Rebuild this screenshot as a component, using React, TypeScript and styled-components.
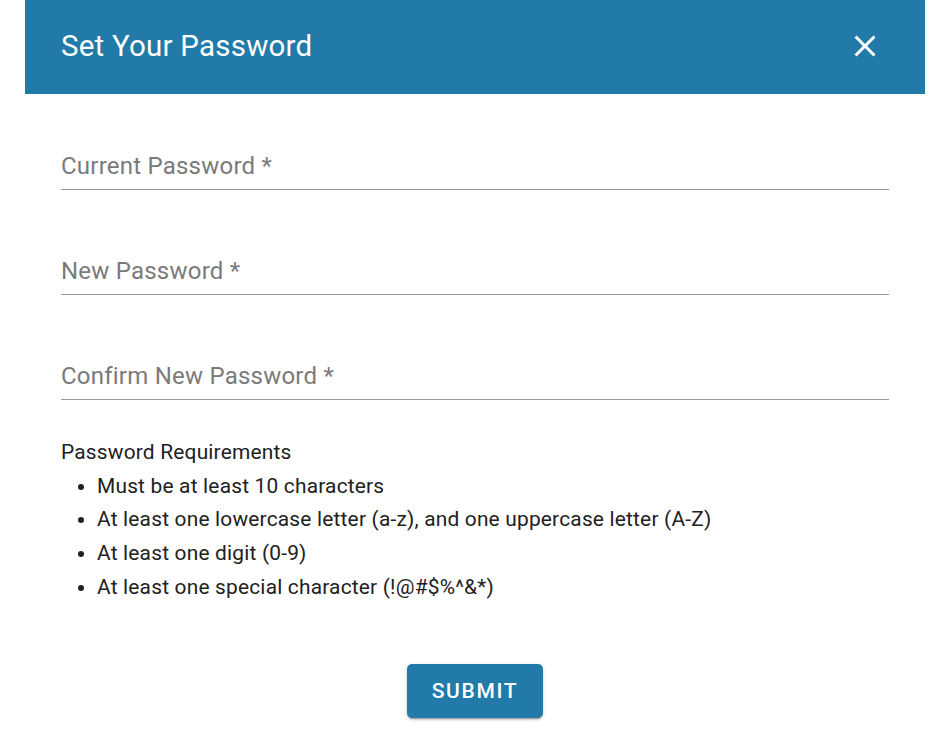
import React from "react";
import styled, { createGlobalStyle } from "styled-components";

const Global = createGlobalStyle`
  html, body { margin: 0; padding: 0; background: #fff; }
  body { font-family: Roboto, "Liberation Sans", Arial, sans-serif; }
  * { box-sizing: border-box; }
`;

const Page = styled.div`
  padding-left: 25px;
  background: #fff;
`;

const Dialog = styled.div`
  width: 900px;
  background: #fff;
`;

const Header = styled.header`
  height: 94px;
  background: #217aa8;
  display: flex;
  align-items: center;
  justify-content: space-between;
  padding: 0 42px 2px 36px;
`;

const Title = styled.h2`
  margin: 0;
  color: #fff;
  font-size: 29.5px;
  font-weight: 400;
  letter-spacing: 0.0075em;
`;

const CloseButton = styled.button`
  border: 0;
  background: transparent;
  padding: 0;
  width: 36px;
  height: 36px;
  display: flex;
  align-items: center;
  justify-content: center;
  color: #fff;
  cursor: pointer;
`;

const Content = styled.div`
  padding: 59px 36px 0 36px;
  display: flex;
  flex-direction: column;
`;

const Fields = styled.div`
  display: flex;
  flex-direction: column;
  gap: 68px;
`;

const Field = styled.div`
  border-bottom: 1px solid #9a9a9a;
  padding-bottom: 10px;
`;

const Label = styled.label`
  display: block;
  font-size: 24px;
  line-height: 26px;
  letter-spacing: 0.00938em;
  color: #7a7a7a;
`;

const Requirements = styled.div`
  margin-top: 36px;
  font-size: 20.9px;
  line-height: 33.7px;
  letter-spacing: 0.00938em;
  color: #212121;
`;

const ReqList = styled.ul`
  margin: 0;
  padding-left: 36px;
`;

const Footer = styled.div`
  display: flex;
  justify-content: center;
  margin-top: 59px;
  padding-bottom: 14px;
`;

const SubmitButton = styled.button`
  width: 136px;
  height: 54px;
  border: 0;
  border-radius: 5px;
  background: #217aa8;
  color: #fff;
  font-family: Roboto, "Liberation Sans", Arial, sans-serif;
  font-size: 21px;
  font-weight: 500;
  letter-spacing: 1.7px;
  text-transform: uppercase;
  box-shadow: 0 3px 1px -2px rgba(0,0,0,0.2), 0 2px 2px 0 rgba(0,0,0,0.14), 0 1px 5px 0 rgba(0,0,0,0.12);
  cursor: pointer;
`;

const CloseIcon = () => (
  <svg width="36" height="36" viewBox="0 0 24 24" fill="currentColor">
    <path d="M19 6.41 17.59 5 12 10.59 6.41 5 5 6.41 10.59 12 5 17.59 6.41 19 12 13.41 17.59 19 19 17.59 13.41 12z" />
  </svg>
);

const fields = ["Current Password *", "New Password *", "Confirm New Password *"];
const reqs = [
  "Must be at least 10 characters",
  "At least one lowercase letter (a-z), and one uppercase letter (A-Z)",
  "At least one digit (0-9)",
  "At least one special character (!@#$%^&*)",
];

export default function App() {
  return (
    <Page>
      <Global />
      <Dialog>
        <Header>
          <Title>Set Your Password</Title>
          <CloseButton aria-label="close">
            <CloseIcon />
          </CloseButton>
        </Header>
        <Content>
          <Fields>
            {fields.map((f) => (
              <Field key={f}>
                <Label>{f}</Label>
              </Field>
            ))}
          </Fields>
          <Requirements>
            Password Requirements
            <ReqList>
              {reqs.map((r) => (
                <li key={r}>{r}</li>
              ))}
            </ReqList>
          </Requirements>
          <Footer>
            <SubmitButton>Submit</SubmitButton>
          </Footer>
        </Content>
      </Dialog>
    </Page>
  );
}
